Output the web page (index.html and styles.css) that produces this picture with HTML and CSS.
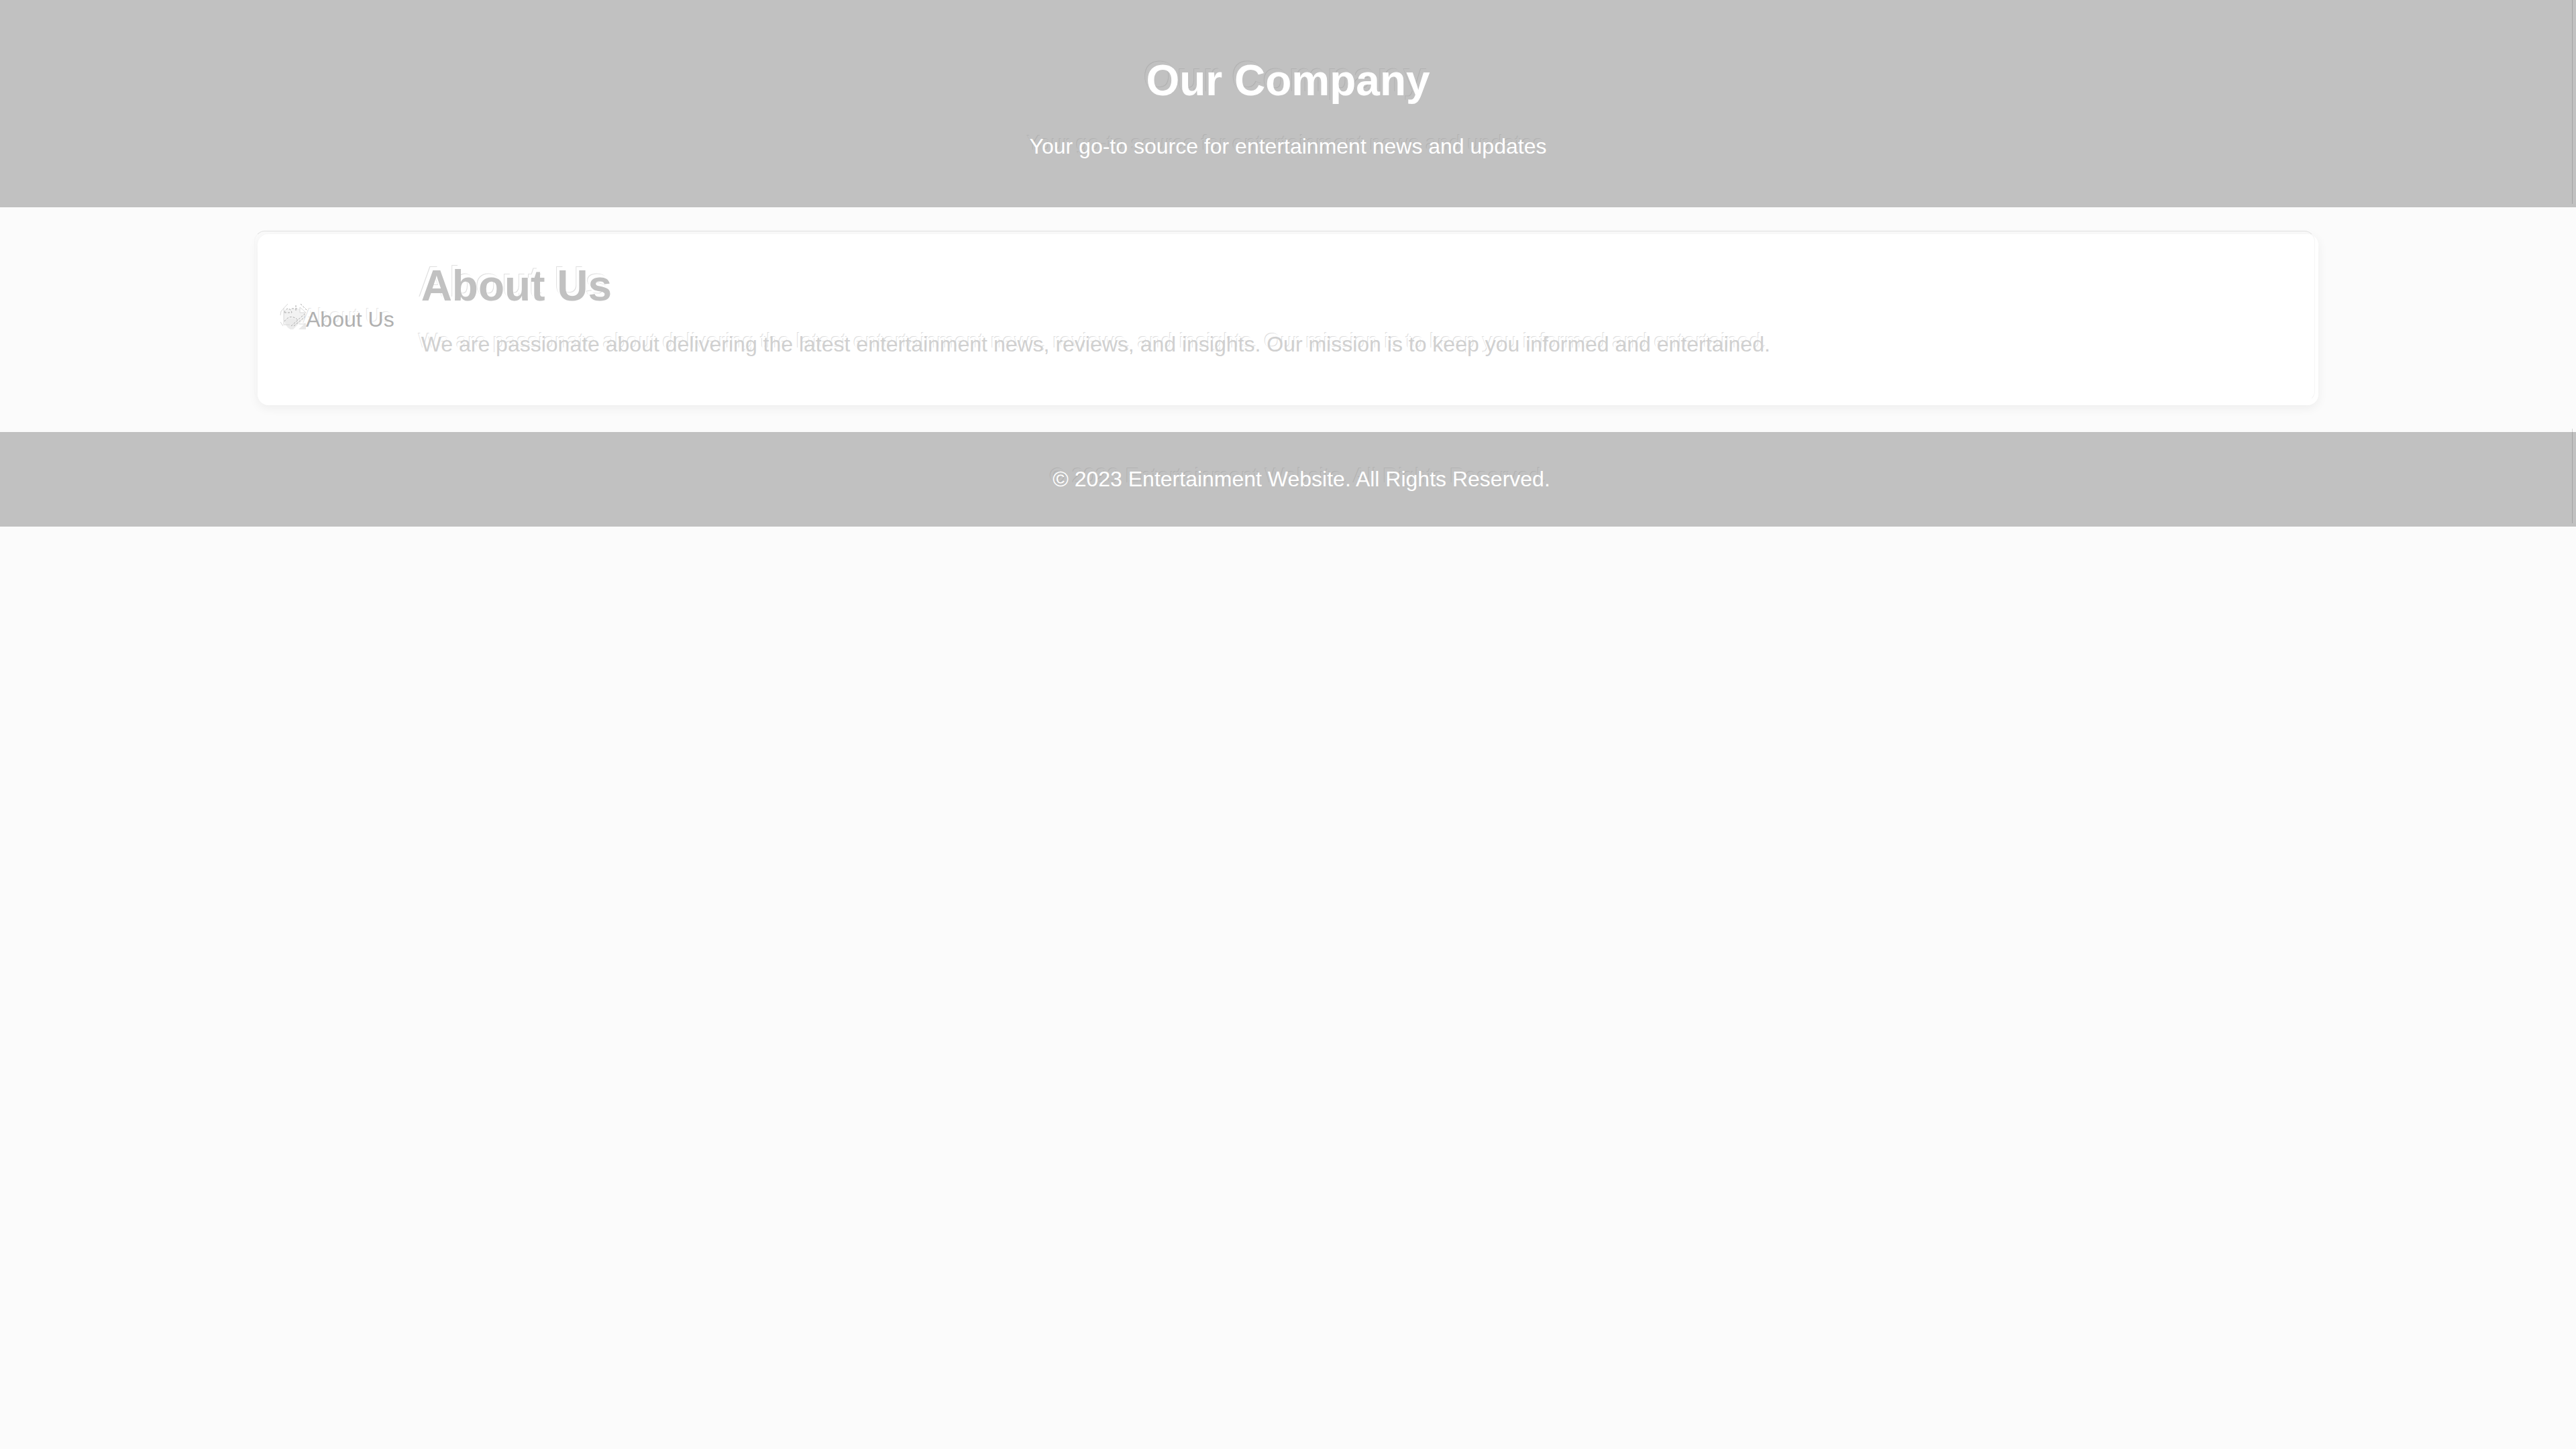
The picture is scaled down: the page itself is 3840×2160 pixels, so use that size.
FILE: index.html
```html
<!DOCTYPE html>
<html lang="en">
<head>
<meta charset="utf-8">
<title>Our Company</title>
<link rel="stylesheet" href="styles.css">
</head>
<body>
<header class="site-header">
  <h1 class="site-title">Our Company</h1>
  <p class="tagline">Your go-to source for entertainment news and updates</p>
</header>
<main class="about">
  <div class="about-image">
    <svg class="image-icon" viewBox="0 0 32 32" aria-hidden="true">
      <path d="M4 -1h20l8 8v5L13 30H9Q-1 24-1 14V6z" fill="#f2f2f2"/>
      <path d="M0 17q9-6 18-1l4 3-9 11H9Q2 26 0 17z" fill="#ebebeb"/>
      <path d="M23-3v8h9z" fill="#fff" stroke="#d8d8d8"/>
      <path d="M32 20v10H21z" fill="#e8e8e8"/>
      <path d="M-6 9l1-6L5-8M-1-2v25h9M-6 19l4 6M22 22h8V6" fill="none" stroke="#d8d8d8"/>
      <path d="M0 5h11q-1-5-6-6Q1 0 0 5M17-6v9M11-1h10M24-8L35 3M0 18q9-12 20-2M10 25L30 7M14 25L31 11" fill="none" stroke="#aaa" stroke-dasharray="3 2"/>
    </svg>
    <span>About Us</span>
  </div>
  <div class="about-content">
    <h2 class="about-title">About Us</h2>
    <p class="about-text">We are passionate about delivering the latest entertainment news, reviews, and insights. Our mission is to keep you informed and entertained.</p>
  </div>
</main>
<footer class="site-footer">
  <p class="copyright">© 2023 Entertainment Website. All Rights Reserved.</p>
</footer>
</body>
</html>
```
FILE: styles.css
```css
* { box-sizing: border-box; }
body {
  margin: 0;
  background: #fbfbfb;
  font: 32px/37px "Liberation Sans", Arial, sans-serif;
}
h1, h2, p { margin: 0; }
.site-header, .site-footer {
  position: relative;
  background: #c1c1c1;
  color: #fff;
  text-align: center;
  text-shadow: -4px -5px 0 #c1c1c1, -5px -6px 0 #b2b2b2;
}
/* Thin engraved line near the right edge of each bar */
.site-header::after, .site-footer::after {
  content: "";
  position: absolute;
  top: -5px;
  right: 5px;
  bottom: 5px;
  width: 1px;
  background: rgba(0, 0, 0, 0.15);
}
.site-header { padding: 83px 40px 72px; }
.site-header::after { top: 0; }
.site-title, .about-title { font-size: 64px; line-height: 74px; }
.tagline { margin-top: 43px; }
.about {
  position: relative;
  display: flex;
  align-items: center;
  gap: 40px;
  width: 80%;
  margin: 40px auto;
  padding: 40px;
  background: #fff;
  border-radius: 16px;
  box-shadow: 0 4px 16px rgba(0, 0, 0, 0.06);
}
/* Engraved outline, shifted up and left of the card */
.about::before {
  content: "";
  position: absolute;
  top: -5px;
  right: 5px;
  bottom: 5px;
  left: -5px;
  border: 1px solid #f5f5f5;
  border-top-color: #e0e0e0;
  border-bottom-color: transparent;
  border-radius: 16px;
}
.about-image {
  display: flex;
  align-items: center;
  color: #b0b0b0;
  text-shadow: -4px -5px 0 #fff, -5px -6px 0 #e6e6e6;
}
.image-icon { width: 32px; height: 32px; overflow: visible; }
.about-content { flex: 1; }
.about-title {
  color: #c1c1c1;
  text-shadow: -4px -5px 0 #fff, -5px -6px 0 #e0e0e0;
}
.about-text {
  margin: 32px 0;
  color: #d0d0d0;
  text-shadow: -4px -5px 0 #fff, -5px -6px 0 #dedede;
}
.site-footer { padding: 52px 0 52px 40px; }
```
